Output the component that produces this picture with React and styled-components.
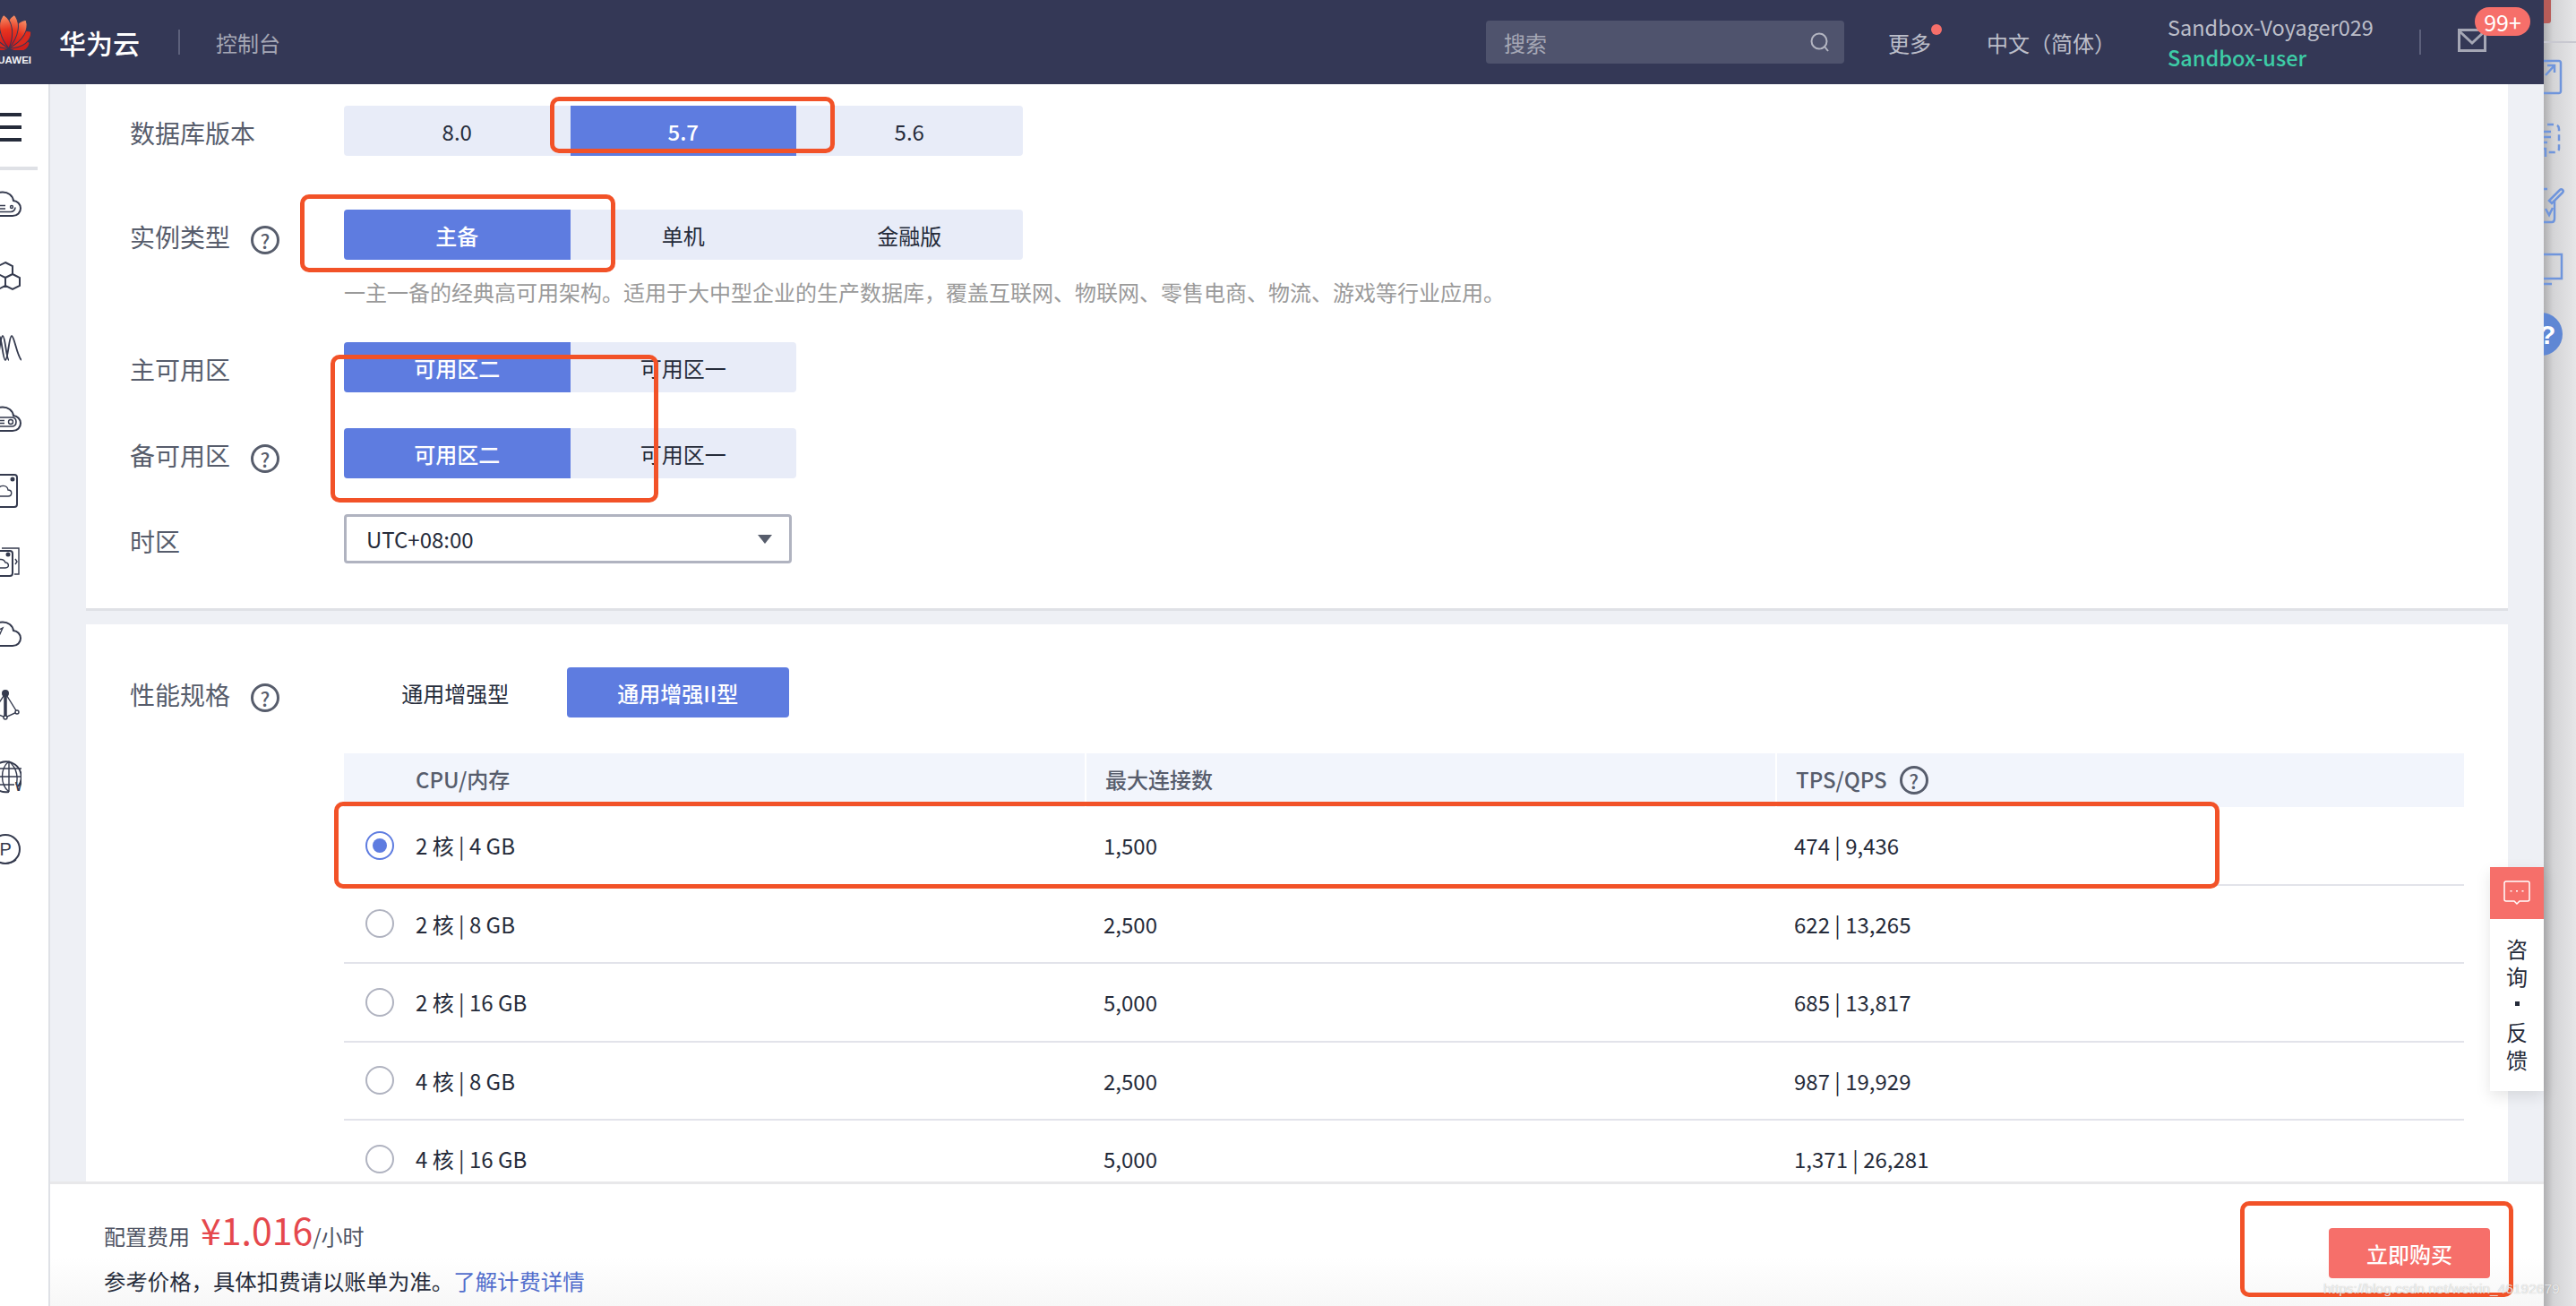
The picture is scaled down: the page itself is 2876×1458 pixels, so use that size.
import React from "react";
import styled, { createGlobalStyle } from "styled-components";

const FONT = `"Noto Sans CJK SC", "Noto Sans", sans-serif`;

const GlobalStyle = createGlobalStyle`
  html, body { margin: 0; padding: 0; background: #fff; }
  body { font-family: ${FONT}; }
  * { box-sizing: border-box; }
`;

const rows = [
  ["2 核 | 4 GB", "1,500", "474 | 9,436"],
  ["2 核 | 8 GB", "2,500", "622 | 13,265"],
  ["2 核 | 16 GB", "5,000", "685 | 13,817"],
  ["4 核 | 8 GB", "2,500", "987 | 19,929"],
  ["4 核 | 16 GB", "5,000", "1,371 | 26,281"],
];

function HuaweiFan() {
  const petals = [
    [75, 24, "#cf1f1c"], [53, 31, "#dc2a1e"], [31, 37, "url(#petal)"], [9, 38, "url(#petal)"],
    [-75, 24, "#cf1f1c"], [-53, 31, "#dc2a1e"], [-31, 37, "url(#petal)"], [-9, 38, "url(#petal)"],
  ];
  return (
    <svg width="72" height="40" viewBox="0 0 72 40">
      <defs>
        <linearGradient id="petal" x1="0" y1="1" x2="0" y2="0">
          <stop offset="0" stopColor="#c8101c" />
          <stop offset="0.55" stopColor="#e8341f" />
          <stop offset="1" stopColor="#f6966c" />
        </linearGradient>
      </defs>
      {petals.map(([angle, len, fill]) => (
        <path
          key={angle}
          transform={`translate(36 38) rotate(${angle})`}
          d={`M0 0 C-9 ${-len * 0.4} -9 ${-len * 0.8} 0 ${-len} C9 ${-len * 0.8} 9 ${-len * 0.4} 0 0Z`}
          fill={fill}
          stroke="#343856"
          strokeWidth="1"
        />
      ))}
    </svg>
  );
}

const CLOUD = "M14 37H38C43.500 37 47 33 47 28.500S43.500 20.500 39 20C38 14 33 10.500 27 10.500C22 10.500 18 13.500 16 17.500C9 18 3 22 3 27.500C3 33 8 37 14 37Z";

const sideIcons = [
  <>
    <path d={CLOUD} />
    <path d="M8 25.500H30M8 29H30M8 32.500H36C38.500 32.500 41 30.500 41 27.500" strokeWidth="1.600" />
    <circle cx="37" cy="27" r="1.500" strokeWidth="1.400" />
  </>,
  <path d="M30 9L38 13V22L30 26L22 22V13ZM30 26V33M38 22L46 26V35L38 39L30 35V26ZM22 22L30 26V35L22 39L14 35V26Z" />,
  <>
    <path d="M6 38C9 38 10 11 13 11S17 38 20 38S24 11 27 11S31 38 34 38" strokeWidth="1.800" />
    <path d="M16 38C19 38 20 11 23 11S27 38 30 38S34 11 37 11S43 34 48 38" strokeWidth="1.800" />
  </>,
  <>
    <path d={CLOUD} />
    <path d="M8 22H37C40 22 42 24 42 27S40 32 37 32H8" strokeWidth="1.600" />
    <path d="M12 25.500H29M12 28.500H29" strokeWidth="1.600" />
    <circle cx="36" cy="27" r="2.500" strokeWidth="1.400" />
  </>,
  <>
    <rect x="6" y="6" width="37" height="36" rx="3" />
    <path d="M14 30H33C38 30 38 23 33 23C32 17 24 17 22 22C17 21 12 25 14 30Z" strokeWidth="1.400" />
    <circle cx="38" cy="11" r="1.500" fill="#343a4e" />
  </>,
  <>
    <path d="M26 8H45V37H40" strokeWidth="1.400" />
    <rect x="4" y="11" width="34" height="28" rx="3" />
    <path d="M14 30H30C35 30 34 24 30 24C28 19 22 20 20 23C15 23 12 26 14 30Z" strokeWidth="1.400" />
    <circle cx="33" cy="15" r="1.500" fill="#343a4e" />
    <path d="M41 20L43 23L41 26" strokeWidth="1.400" />
  </>,
  <>
    <path d={CLOUD} />
    <path d="M8 27L27 17L18 37L16 28L8 27Z" strokeWidth="1.400" />
  </>,
  <>
    <path d="M30 10L43 31L30 37L16 31Z" strokeWidth="1.400" />
    <path d="M30 10V37" strokeWidth="3.500" />
    <circle cx="30" cy="10" r="3" fill="#343a4e" />
    <circle cx="43" cy="31" r="2" fill="#fff" strokeWidth="1.400" />
    <circle cx="30" cy="37" r="2" fill="#fff" strokeWidth="1.400" />
  </>,
  <>
    <path d="M44 34A17 17 0 1 0 34 40" />
    <path d="M34 6V40M34 6C24 14 24 32 34 40M34 6C44 14 44 26 42 32M17 23H51M20 14H48M20 32H40" strokeWidth="1.400" />
    <text x="41" y="39" fontSize="14" fontWeight="700" fill="#343a4e" stroke="none" fontFamily="Liberation Sans, sans-serif">W</text>
  </>,
  <>
    <circle cx="30" cy="24" r="16" />
    <path d="M18 36C24 41 36 41 42 36" strokeWidth="1.400" />
    <text x="18" y="31" fontSize="20" fill="#343a4e" stroke="none" fontFamily="Liberation Sans, sans-serif">IP</text>
  </>,
];

export default function App() {
  return (
    <Page>
      <GlobalStyle />
      <Console>
        <TopBar>
          <Logo>
            <HuaweiFan />
            <LogoWord>HUAWEI</LogoWord>
          </Logo>
          <BrandName>华为云</BrandName>
          <BarRule />
          <ConsoleLink>控制台</ConsoleLink>
          <SearchBox>
            <span>搜索</span>
            <svg width="26" height="26" viewBox="0 0 26 26" fill="none" stroke="#b4b6c2" strokeWidth="2">
              <circle cx="12" cy="12" r="8.500" />
              <path d="M18 18L22 23" />
            </svg>
          </SearchBox>
          <MoreLink>更多<RedDot /></MoreLink>
          <LangLink>中文（简体）</LangLink>
          <UserBlock>
            <UserName>Sandbox-Voyager029</UserName>
            <UserRole>Sandbox-user</UserRole>
          </UserBlock>
          <BarRule />
          <MailWrap>
            <svg width="32" height="26" viewBox="0 0 32 26" fill="none" stroke="#a5a7b5" strokeWidth="3">
              <rect x="1.500" y="1.500" width="29" height="23" />
              <path d="M2 3L16 16L30 3" />
            </svg>
            <Badge>99+</Badge>
          </MailWrap>
        </TopBar>

        <Body>
          <Sidebar>
            <Burger><i /><i /><i /></Burger>
            <SideRule />
            <SideIcons>
              {sideIcons.map((icon, i) => (
                <svg key={i} width="48" height="48" viewBox="0 0 48 48" fill="none" stroke="#343a4e" strokeWidth="2">
                  {icon}
                </svg>
              ))}
            </SideIcons>
          </Sidebar>

          <Main>
            <Scroller>
              <Card $first>
                <FormRow>
                  <Label>数据库版本</Label>
                  <Segment>
                    <SegButton>8.0</SegButton>
                    <SegButton $active>5.7</SegButton>
                    <SegButton>5.6</SegButton>
                  </Segment>
                </FormRow>
                <FormRow $gap={60}>
                  <Label>实例类型<Help>?</Help></Label>
                  <div>
                    <Segment>
                      <SegButton $active>主备</SegButton>
                      <SegButton>单机</SegButton>
                      <SegButton>金融版</SegButton>
                    </Segment>
                    <Hint>一主一备的经典高可用架构。适用于大中型企业的生产数据库，覆盖互联网、物联网、零售电商、物流、游戏等行业应用。</Hint>
                  </div>
                </FormRow>
                <FormRow $gap={39}>
                  <Label>主可用区</Label>
                  <Segment>
                    <SegButton $active>可用区二</SegButton>
                    <SegButton>可用区一</SegButton>
                  </Segment>
                </FormRow>
                <FormRow $gap={40}>
                  <Label>备可用区<Help>?</Help></Label>
                  <Segment>
                    <SegButton $active>可用区二</SegButton>
                    <SegButton>可用区一</SegButton>
                  </Segment>
                </FormRow>
                <FormRow $gap={40}>
                  <Label>时区</Label>
                  <SelectBox>UTC+08:00<Caret /></SelectBox>
                </FormRow>
              </Card>

              <Card>
                <FormRow>
                  <Label>性能规格<Help>?</Help></Label>
                  <Tabs>
                    <Tab>通用增强型</Tab>
                    <Tab $active>通用增强II型</Tab>
                  </Tabs>
                </FormRow>
                <FormRow $gap={40}>
                  <span />
                  <div>
                    <TableHead>
                      <HeadCell $first>CPU/内存</HeadCell>
                      <HeadCell>最大连接数</HeadCell>
                      <HeadCell>TPS/QPS<Help>?</Help></HeadCell>
                    </TableHead>
                    {rows.map((row, i) => (
                      <TableRow key={row[0]}>
                        <Cell $first>
                          <Radio $checked={i === 0} />
                          {row[0]}
                        </Cell>
                        <Cell>{row[1]}</Cell>
                        <Cell>{row[2]}</Cell>
                      </TableRow>
                    ))}
                  </div>
                </FormRow>
              </Card>
            </Scroller>

            <Footer>
              <PriceBlock>
                <PriceLine>配置费用<Price>¥1.016</Price>/小时</PriceLine>
                <NoteLine>参考价格，具体扣费请以账单为准。<NoteLink>了解计费详情</NoteLink></NoteLine>
              </PriceBlock>
              <BuyButton>立即购买</BuyButton>
            </Footer>
          </Main>
        </Body>
      </Console>

      <BackWindow>
        <BackTab />
        <BackRule />
        <svg width="36" height="360" viewBox="0 0 36 360" fill="none" stroke="#6f95dc" strokeWidth="2.500">
          <path d="M-2 20H17C18 20 19 21 19 22V54C19 55 18 56 17 56H-2" />
          <path d="M2 36L12 25M4 25H12V33" />
          <path d="M4 91H12C15 91 17 93 17 96V118C17 120 15 122 12 122H4" strokeDasharray="7 4" />
          <path d="M-2 99H8M-2 105H8M-2 111H4M-2 118H2V127" />
          <path d="M-2 163H4M12 175V196C12 199 11 200 9 200H-2" />
          <path d="M6 176L18 164C20 162 23 165 21 167L9 179Z" />
          <path d="M2 185L6 192L10 184" />
          <path d="M-2 236H20V263H-2M-2 269H9" />
          <circle cx="-3" cy="325" r="24" fill="#5f87d4" stroke="none" />
          <text x="-5" y="336" fontSize="30" fontWeight="700" fill="#fff" stroke="none" fontFamily="Liberation Sans, sans-serif">?</text>
        </svg>
      </BackWindow>

      <Marker $x={614} $y={108} $w={318} $h={63} />
      <Marker $x={335} $y={217} $w={352} $h={87} />
      <Marker $x={369} $y={396} $w={366} $h={165} />
      <Marker $x={373} $y={895} $w={2105} $h={97} />
      <Marker $x={2501} $y={1341} $w={305} $h={107} />

      <Feedback>
        <FeedbackHead>
          <svg width="30" height="28" viewBox="0 0 30 28" fill="none" stroke="#fff" strokeWidth="1.500">
            <path d="M3 1H27C28 1 29 2 29 3V21C29 22 28 23 27 23H18L15 26L12 23H3C2 23 1 22 1 21V3C1 2 2 1 3 1Z" />
            <path d="M8.500 11V12.500M15 11V12.500M21.500 11V12.500" strokeWidth="2" />
          </svg>
        </FeedbackHead>
        <FeedbackText>
          <span>咨</span><span>询</span><FeedbackDot /><span>反</span><span>馈</span>
        </FeedbackText>
      </Feedback>

      <Watermark>https://blog.csdn.net/weixin_46192679</Watermark>
    </Page>
  );
}

const Page = styled.div`
  position: relative;
  display: flex;
  width: 2876px;
  height: 1458px;
  overflow: hidden;
  color: #252b3a;
  font-size: 24px;
`;

const Console = styled.div`
  width: 2840px;
  height: 100%;
  display: flex;
  flex-direction: column;
`;

const TopBar = styled.header`
  height: 94px;
  flex: none;
  display: flex;
  align-items: center;
  padding-right: 64px;
  background: #343856;
`;

const Logo = styled.div`
  width: 72px;
  height: 94px;
  margin-left: -26px;
  padding-top: 16px;
  display: flex;
  flex-direction: column;
  align-items: center;
`;

const LogoWord = styled.span`
  margin-top: 5px;
  margin-left: 4px;
  font: 700 11.500px/12px "Liberation Sans", sans-serif;
  color: #f2f2f5;
`;

const BrandName = styled.span`
  margin-left: 20px;
  font-size: 30px;
  font-weight: 500;
  color: #fff;
`;

const BarRule = styled.i`
  width: 2px;
  height: 28px;
  margin-left: 43px;
  background: #5c607b;
`;

const ConsoleLink = styled.span`
  margin-left: 40px;
  color: #a5a7b5;
`;

const SearchBox = styled.div`
  width: 400px;
  height: 48px;
  margin-left: auto;
  margin-right: 49px;
  padding: 0 14px 0 20px;
  display: flex;
  align-items: center;
  justify-content: space-between;
  border-radius: 4px;
  background: #4f536d;
  color: #a5a7b5;
`;

const MoreLink = styled.span`
  position: relative;
  width: 110px;
  color: #bcbec9;
`;

const RedDot = styled.i`
  position: absolute;
  top: -3px;
  left: 48px;
  width: 12px;
  height: 12px;
  border-radius: 50%;
  background: #f66f6a;
`;

const LangLink = styled.span`
  width: 202px;
  color: #bcbec9;
`;

const UserBlock = styled.div`
  width: 238px;
  display: flex;
  flex-direction: column;
  gap: 2px;
  font-size: 23.500px;
  line-height: 32px;
  white-space: nowrap;
`;

const UserName = styled.span`
  color: #bcbec9;
`;

const UserRole = styled.span`
  color: #3dcca6;
  font-weight: 500;
`;

const MailWrap = styled.div`
  position: relative;
  width: 32px;
  height: 26px;
  margin-left: 41px;
  margin-top: -4px;
  line-height: 0;
`;

const Badge = styled.span`
  position: absolute;
  top: -24px;
  left: 19px;
  width: 62px;
  height: 32px;
  border-radius: 16px;
  background: #f66f6a;
  color: #fff;
  text-align: center;
  font-size: 25px;
  line-height: 32px;
`;

const Body = styled.div`
  flex: 1;
  min-height: 0;
  display: flex;
`;

const Sidebar = styled.aside`
  width: 56px;
  flex: none;
  overflow: hidden;
  background: #fff;
  border-right: 2px solid #dfe1e6;
`;

const Burger = styled.div`
  width: 24px;
  padding-top: 32px;
  display: flex;
  flex-direction: column;
  gap: 10px;

  i {
    display: block;
    height: 4px;
    background: #252b3a;
  }
`;

const SideRule = styled.div`
  width: 42px;
  height: 4px;
  margin-top: 28px;
  background: #dfe1e6;
`;

const SideIcons = styled.div`
  margin: 14px 0 0 -24px;
  display: flex;
  flex-direction: column;
  gap: 32px;
`;

const Main = styled.main`
  position: relative;
  flex: 1;
  min-width: 0;
  display: flex;
  flex-direction: column;
`;

const Scroller = styled.div`
  flex: 1;
  min-height: 0;
  overflow: hidden;
  padding: 0 40px;
  background: #eef0f5;
`;

const Card = styled.section`
  padding: ${(p) => (p.$first ? "24px 49px 49px" : "48px 49px 0")};
  margin-bottom: 15px;
  background: #fff;
  border-bottom: ${(p) => (p.$first ? "3px solid #dfe1e6" : "0")};
`;

const FormRow = styled.div`
  display: grid;
  grid-template-columns: 239px 1fr;
  margin-top: ${(p) => p.$gap || 0}px;
`;

const Label = styled.div`
  height: 56px;
  padding-top: 4px;
  display: flex;
  align-items: center;
  font-size: 28px;
  color: #575d6c;
`;

const Help = styled.i`
  width: 32px;
  height: 32px;
  margin-left: 23px;
  margin-top: 7px;
  border: 3px solid #575d6c;
  border-radius: 50%;
  display: inline-flex;
  align-items: center;
  justify-content: center;
  font-style: normal;
  font-size: 22px;
  font-weight: 500;
  color: #575d6c;
`;

const Segment = styled.div`
  display: inline-flex;
  justify-self: start;
  vertical-align: top;
  border-radius: 4px;
  background: #e8ecf8;
`;

const SegButton = styled.div`
  width: 252.500px;
  height: 56px;
  display: flex;
  align-items: center;
  justify-content: center;
  color: ${(p) => (p.$active ? "#fff" : "#252b3a")};
  background: ${(p) => (p.$active ? "#5e7ce0" : "transparent")};
  font-weight: ${(p) => (p.$active ? 500 : 400)};
  &:first-child { border-radius: 4px 0 0 4px; }
`;

const Hint = styled.p`
  margin: 19px 0 0;
  line-height: 34px;
  color: #9a9a9a;
`;

const SelectBox = styled.div`
  position: relative;
  width: 500px;
  height: 55px;
  padding-left: 22px;
  display: flex;
  align-items: center;
  border: 3px solid #b0b3c0;
  border-radius: 4px;
`;

const Caret = styled.i`
  position: absolute;
  right: 19px;
  top: 20px;
  border-style: solid;
  border-width: 10px 8px 0;
  border-color: #575d6c transparent transparent;
`;

const Tabs = styled.div`
  display: flex;
`;

const Tab = styled.div`
  width: 248.500px;
  height: 56px;
  display: flex;
  align-items: center;
  justify-content: center;
  border-radius: 4px;
  color: ${(p) => (p.$active ? "#fff" : "#252b3a")};
  background: ${(p) => (p.$active ? "#5e7ce0" : "transparent")};
  font-weight: ${(p) => (p.$active ? 500 : 400)};
`;

const columns = "827px 771px 769px";

const TableHead = styled.div`
  display: grid;
  grid-template-columns: ${columns};
  height: 60px;
  background: #f2f5fc;
`;

const HeadCell = styled.div`
  display: flex;
  align-items: center;
  padding-left: ${(p) => (p.$first ? "80px" : "21px")};
  padding-bottom: 4px;
  border-left: ${(p) => (p.$first ? "0" : "2px solid #fff")};
  font-weight: 500;
  color: #575d6c;

  ${Help} {
    margin: 3px 0 0 14px;
  }
`;

const TableRow = styled.div`
  display: grid;
  grid-template-columns: ${columns};
  height: 87.500px;
  align-items: center;
  border-bottom: 2px solid #e2e3ea;
`;

const Cell = styled.div`
  display: flex;
  align-items: center;
  padding-left: ${(p) => (p.$first ? "24px" : "21px")};
`;

const Radio = styled.i`
  position: relative;
  width: 32px;
  height: 32px;
  margin-right: 24px;
  border-radius: 50%;
  background: #fff;
  border: 2px solid ${(p) => (p.$checked ? "#5e7ce0" : "#b0b3c0")};

  &::after {
    content: "";
    display: ${(p) => (p.$checked ? "block" : "none")};
    position: absolute;
    inset: 6px;
    border-radius: 50%;
    background: #5e7ce0;
  }
`;

const Footer = styled.footer`
  position: relative;
  height: 139px;
  flex: none;
  display: flex;
  justify-content: space-between;
  padding: 24px 60px 0 60px;
  border-top: 3px solid #e8e8ea;
  background: linear-gradient(#fff 60%, #f7f7f7);
`;

const PriceBlock = styled.div`
  display: flex;
  flex-direction: column;
`;

const PriceLine = styled.div`
  height: 52px;
  line-height: 52px;
  color: #4e5363;
`;

const Price = styled.b`
  margin-left: 12px;
  font-size: 41px;
  font-weight: 400;
  color: #e5484d;
`;

const NoteLine = styled.div`
  margin-top: 14px;
  font-size: 24.400px;
  line-height: 36px;
`;

const NoteLink = styled.span`
  color: #526ecc;
`;

const BuyButton = styled.div`
  width: 180px;
  height: 56px;
  margin-top: 25px;
  display: flex;
  align-items: center;
  justify-content: center;
  border-radius: 4px;
  background: #f66f6a;
  color: #fff;
  font-weight: 500;
`;

const BackWindow = styled.div`
  position: relative;
  flex: 1;
  padding-top: 48px;
  background: linear-gradient(90deg, #b0b0b2, #d4d4d6 30%, #e6e6e8);
`;

const BackTab = styled.i`
  position: absolute;
  top: 0;
  left: 0;
  width: 8px;
  height: 26px;
  border-radius: 0 0 3px 0;
  background: #b85c58;
`;

const BackRule = styled.i`
  position: absolute;
  top: 46px;
  left: 0;
  right: 0;
  height: 2px;
  background: #c8c8d0;
`;

const Marker = styled.i`
  position: absolute;
  left: ${(p) => p.$x}px;
  top: ${(p) => p.$y}px;
  width: ${(p) => p.$w}px;
  height: ${(p) => p.$h}px;
  border: 5px solid #f25228;
  border-radius: 10px;
`;

const Feedback = styled.div`
  position: absolute;
  left: 2780px;
  top: 968px;
  width: 60px;
  height: 250px;
  background: #fff;
  box-shadow: 0 6px 16px rgba(0, 0, 0, 0.1);
`;

const FeedbackHead = styled.div`
  height: 58px;
  display: flex;
  align-items: center;
  justify-content: center;
  background: #f66f6a;
`;

const FeedbackText = styled.div`
  padding-top: 17px;
  display: flex;
  flex-direction: column;
  align-items: center;
  line-height: 31px;
`;

const FeedbackDot = styled.i`
  width: 5px;
  height: 5px;
  margin: 13px 0;
  background: #252b3a;
`;

const Watermark = styled.span`
  position: absolute;
  left: 2594px;
  top: 1428px;
  font: 15.500px/22px "Liberation Sans", sans-serif;
  color: rgba(255, 255, 255, 0.75);
  text-shadow: 0 0 1px rgba(120, 120, 120, 0.6);
`;
